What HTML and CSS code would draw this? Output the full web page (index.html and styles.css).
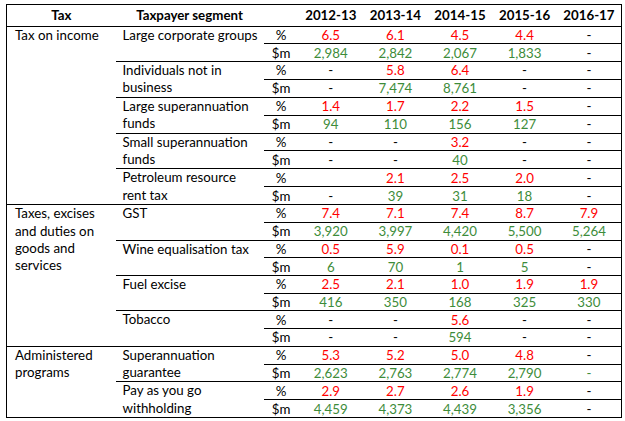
FILE: index.html
```html
<!DOCTYPE html>
<html lang="en">
<head>
<meta charset="utf-8">
<title>Tax gap table</title>
<link rel="stylesheet" href="styles.css">
</head>
<body>
<div class="wrap">
<table class="gap">
<colgroup>
<col class="c-tax"><col class="c-seg"><col class="c-unit">
<col class="c-yr"><col class="c-yr"><col class="c-yr"><col class="c-yr"><col class="c-yr">
</colgroup>
<thead>
<tr class="head">
<th>Tax</th><th>Taxpayer segment</th><th></th>
<th>2012-13</th><th>2013-14</th><th>2014-15</th><th>2015-16</th><th>2016-17</th>
</tr>
</thead>
<tbody>
<tr><td class="tax grp" rowspan="10">Tax on income</td><td class="seg" rowspan="2">Large corporate groups</td><td class="unit">%</td><td class="r">6.5</td><td class="r">6.1</td><td class="r">4.5</td><td class="r">4.4</td><td>-</td></tr>
<tr><td class="unit">$m</td><td class="g">2,984</td><td class="g">2,842</td><td class="g">2,067</td><td class="g">1,833</td><td>-</td></tr>
<tr><td class="seg" rowspan="2">Individuals not in<br>business</td><td class="unit">%</td><td>-</td><td class="r">5.8</td><td class="r">6.4</td><td>-</td><td>-</td></tr>
<tr><td class="unit">$m</td><td>-</td><td class="g">7,474</td><td class="g">8,761</td><td>-</td><td>-</td></tr>
<tr><td class="seg" rowspan="2">Large superannuation<br>funds</td><td class="unit">%</td><td class="r">1.4</td><td class="r">1.7</td><td class="r">2.2</td><td class="r">1.5</td><td>-</td></tr>
<tr><td class="unit">$m</td><td class="g">94</td><td class="g">110</td><td class="g">156</td><td class="g">127</td><td>-</td></tr>
<tr><td class="seg" rowspan="2">Small superannuation<br>funds</td><td class="unit">%</td><td>-</td><td>-</td><td class="r">3.2</td><td>-</td><td>-</td></tr>
<tr><td class="unit">$m</td><td>-</td><td>-</td><td class="g">40</td><td>-</td><td>-</td></tr>
<tr><td class="seg" rowspan="2">Petroleum resource<br>rent tax</td><td class="unit">%</td><td></td><td class="r">2.1</td><td class="r">2.5</td><td class="r">2.0</td><td>-</td></tr>
<tr><td class="unit">$m</td><td>-</td><td class="g">39</td><td class="g">31</td><td class="g">18</td><td>-</td></tr>

<tr><td class="tax grp" rowspan="8">Taxes, excises<br>and duties on<br>goods and<br>services</td><td class="seg" rowspan="2">GST</td><td class="unit">%</td><td class="r">7.4</td><td class="r">7.1</td><td class="r">7.4</td><td class="r">8.7</td><td class="r">7.9</td></tr>
<tr><td class="unit">$m</td><td class="g">3,920</td><td class="g">3,997</td><td class="g">4,420</td><td class="g">5,500</td><td class="g">5,264</td></tr>
<tr><td class="seg" rowspan="2">Wine equalisation tax</td><td class="unit">%</td><td class="r">0.5</td><td class="r">5.9</td><td class="r">0.1</td><td class="r">0.5</td><td>-</td></tr>
<tr><td class="unit">$m</td><td class="g">6</td><td class="g">70</td><td class="g">1</td><td class="g">5</td><td>-</td></tr>
<tr><td class="seg" rowspan="2">Fuel excise</td><td class="unit">%</td><td class="r">2.5</td><td class="r">2.1</td><td class="r">1.0</td><td class="r">1.9</td><td class="r">1.9</td></tr>
<tr><td class="unit">$m</td><td class="g">416</td><td class="g">350</td><td class="g">168</td><td class="g">325</td><td class="g">330</td></tr>
<tr><td class="seg" rowspan="2">Tobacco</td><td class="unit">%</td><td>-</td><td>-</td><td class="r">5.6</td><td>-</td><td>-</td></tr>
<tr><td class="unit">$m</td><td>-</td><td>-</td><td class="g">594</td><td>-</td><td>-</td></tr>

<tr><td class="tax grp" rowspan="4">Administered<br>programs</td><td class="seg" rowspan="2">Superannuation<br>guarantee</td><td class="unit">%</td><td class="r">5.3</td><td class="r">5.2</td><td class="r">5.0</td><td class="r">4.8</td><td>-</td></tr>
<tr><td class="unit">$m</td><td class="g">2,623</td><td class="g">2,763</td><td class="g">2,774</td><td class="g">2,790</td><td class="g">-</td></tr>
<tr><td class="seg" rowspan="2">Pay as you go<br>withholding</td><td class="unit">%</td><td class="r">2.9</td><td class="r">2.7</td><td class="r">2.6</td><td class="r">1.9</td><td>-</td></tr>
<tr><td class="unit">$m</td><td class="g">4,459</td><td class="g">4,373</td><td class="g">4,439</td><td class="g">3,356</td><td>-</td></tr>
</tbody>
</table>
</div>
</body>
</html>
```
FILE: styles.css
```css
html, body {
  margin: 0;
  padding: 0;
  background: #fff;
}
.wrap {
  padding: 4px 0 0 6px;
}
.gap {
  border-collapse: collapse;
  table-layout: fixed;
  width: 615px;
  border: 1px solid #000;
  font-family: Lato, "Open Sans", sans-serif;
  font-size: 13.3px;
  color: #000;
}
.c-tax { width: 109px; }
.c-seg { width: 148px; }
.c-unit { width: 35px; }
.c-yr { width: 64.6px; }
.gap tr { height: 17.7px; }
.gap tr.head { height: 21.5px; }
.gap th {
  padding: 0;
  font-weight: 700;
  text-align: center;
  border-bottom: 1px solid #000;
  line-height: 16px;
}
.gap td {
  padding: 0;
  line-height: 16px;
  text-align: center;
  vertical-align: middle;
  border-bottom: 1px solid #000;
  white-space: nowrap;
}
.gap td.tax, .gap td.seg {
  text-align: left;
  vertical-align: top;
  padding-left: 8px;
  line-height: 17.4px;
}
.gap td.seg { padding-left: 7px; }
.r { color: #ff0000; }
.g { color: #3d8c3a; }
```
